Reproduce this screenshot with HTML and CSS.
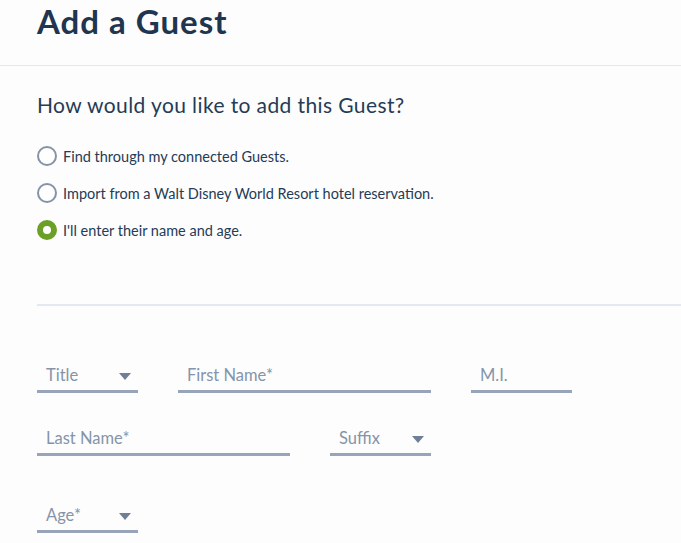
FILE: index.html
```html
<!DOCTYPE html>
<html>
<head>
<meta charset="utf-8">
<link rel="stylesheet" href="styles.css">
</head>
<body>
<header class="page-header">
  <h1 class="page-title">Add a Guest</h1>
</header>
<main class="content">
  <section class="method">
    <h2 class="question">How would you like to add this Guest?</h2>
    <ul class="options">
      <li class="option"><span class="radio"></span><span class="option-text">Find through my connected Guests.</span></li>
      <li class="option"><span class="radio"></span><span class="option-text">Import from a Walt Disney World Resort hotel reservation.</span></li>
      <li class="option"><span class="radio radio-on"></span><span class="option-text">I'll enter their name and age.</span></li>
    </ul>
  </section>
  <form class="guest-form">
    <div class="row row-1">
      <div class="field short select"><span class="label">Title</span><span class="caret"></span></div>
      <div class="field long"><span class="label">First Name*</span></div>
      <div class="field short"><span class="label">M.I.</span></div>
    </div>
    <div class="row row-2">
      <div class="field long"><span class="label">Last Name*</span></div>
      <div class="field short select"><span class="label">Suffix</span><span class="caret"></span></div>
    </div>
    <div class="row row-3">
      <div class="field short select"><span class="label">Age*</span><span class="caret"></span></div>
    </div>
  </form>
</main>
</body>
</html>
```
FILE: styles.css
```css
html, body {
  margin: 0;
  padding: 0;
  background: #fdfdfd;
  font-family: Lato, "Noto Sans", sans-serif;
  color: #253b56;
}
.page-header {
  height: 66px;
  border-bottom: 1px solid #e1e8f0;
  padding-left: 37px;
  box-sizing: border-box;
}
.page-title {
  margin: 0;
  padding-top: 1px;
  font-size: 33px;
  font-weight: 700;
  color: #1f3550;
  line-height: 40px;
  letter-spacing: 1px;
}
.content {
  padding-left: 37px;
}
.method {
  border-bottom: 2px solid #e3e9f1;
  padding-top: 26px;
  height: 240px;
  box-sizing: border-box;
}
.question {
  margin: 0;
  font-size: 21px;
  font-weight: 400;
  line-height: 26px;
  color: #253b56;
  letter-spacing: 0.4px;
}
.options {
  list-style: none;
  margin: 0;
  padding: 0;
  padding-top: 28px;
  display: flex;
  flex-direction: column;
  gap: 17px;
}
.option {
  display: flex;
  align-items: center;
  gap: 6px;
  height: 20px;
  font-size: 14.5px;
  color: #253b56;
}
.radio {
  width: 20px;
  height: 20px;
  box-sizing: border-box;
  border: 2px solid #8593a8;
  border-radius: 50%;
  background: #fff;
  flex: none;
}
.radio-on {
  border: 6px solid #6b9f25;
}
.guest-form {
  padding-top: 53px;
  display: flex;
  flex-direction: column;
}
.row {
  display: flex;
  gap: 40px;
}
.row-2 { margin-top: 29px; }
.row-3 { margin-top: 43px; }
.field {
  height: 34px;
  box-sizing: border-box;
  border-bottom: 3px solid #98a5b8;
  display: flex;
  align-items: center;
  justify-content: space-between;
  padding: 0 7px 0 9px;
}
.short { width: 101px; }
.long { width: 253px; }
.label {
  font-size: 16.5px;
  color: #8594aa;
}
.caret {
  width: 0;
  height: 0;
  border-left: 6px solid transparent;
  border-right: 6px solid transparent;
  border-top: 7px solid #6f7f96;
  margin-top: 3px;
}
```
